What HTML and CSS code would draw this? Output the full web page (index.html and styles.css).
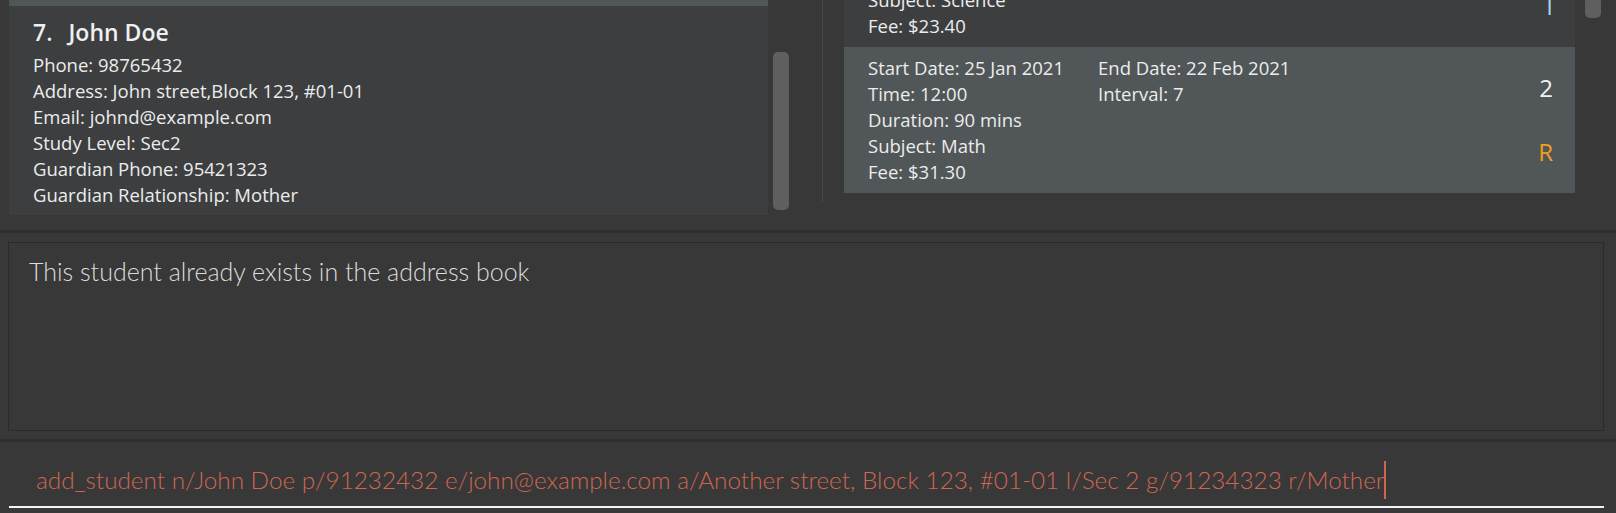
FILE: index.html
```html
<!DOCTYPE html>
<html>
<head>
<meta charset="utf-8">
<link rel="stylesheet" href="styles.css">
</head>
<body>
<div class="app">
  <div class="top">
    <div class="left-pane">
      <div class="list left-list">
        <div class="card-stub"></div>
        <div class="person">
          <div class="name"><span class="num">7.</span><span>John Doe</span></div>
          <div class="lines">
            <div>Phone: 98765432</div>
            <div>Address: John street,Block 123, #01-01</div>
            <div>Email: johnd@example.com</div>
            <div>Study Level: Sec2</div>
            <div>Guardian Phone: 95421323</div>
            <div>Guardian Relationship: Mother</div>
          </div>
        </div>
      </div>
      <div class="scrollbar"><div class="thumb left-thumb"></div></div>
    </div>
    <div class="right-pane">
      <div class="list right-list">
        <div class="right-inner">
          <div class="lesson">
            <div class="col col1">
              <div>Start Date: 18 Jan 2021</div>
              <div>Time: 10:00</div>
              <div>Duration: 60 mins</div>
              <div>Subject: Science</div>
              <div>Fee: $23.40</div>
            </div>
            <div class="col col2">
              <div>End Date: 15 Feb 2021</div>
              <div>Interval: 7</div>
            </div>
            <div class="side">
              <div class="idx">1</div>
              <div class="tag tag-blue">I</div>
            </div>
          </div>
          <div class="lesson selected">
            <div class="col col1">
              <div>Start Date: 25 Jan 2021</div>
              <div>Time: 12:00</div>
              <div>Duration: 90 mins</div>
              <div>Subject: Math</div>
              <div>Fee: $31.30</div>
            </div>
            <div class="col col2">
              <div>End Date: 22 Feb 2021</div>
              <div>Interval: 7</div>
            </div>
            <div class="side">
              <div class="idx">2</div>
              <div class="tag tag-orange">R</div>
            </div>
          </div>
        </div>
      </div>
      <div class="scrollbar right-scroll"><div class="thumb right-thumb"></div></div>
    </div>
  </div>
  <div class="divider"></div>
  <div class="result-wrap">
    <div class="result">This student already exists in the address book</div>
  </div>
  <div class="divider"></div>
  <div class="command">
    <div class="command-field"><span class="cmd-text">add_student n/John Doe p/91232432 e/john@example.com a/Another street, Block 123, #01-01 l/Sec 2 g/91234323 r/Mother</span><span class="caret"></span></div>
  </div>
</div>
</body>
</html>
```
FILE: styles.css
```css
html, body {
  margin: 0;
  padding: 0;
  background: #383838;
  overflow: hidden;
}

body {
  font-family: "Open Sans", "Noto Sans", sans-serif;
  color: #ececec;
}

.app {
  width: 1616px;
  height: 513px;
  display: flex;
  flex-direction: column;
}

.top {
  height: 230px;
  display: flex;
  overflow: hidden;
  flex-shrink: 0;
}

.left-pane {
  display: flex;
  width: 822px;
  flex-shrink: 0;
}

.list {
  overflow: hidden;
}

.left-list {
  margin-left: 9px;
  width: 759px;
  height: 230px;
}

.card-stub {
  height: 6px;
  background: #515658;
}

.person {
  background: #3c3e3f;
  height: 209px;
  box-sizing: border-box;
  padding: 11px 0 0 24px;
}

.name {
  display: flex;
  gap: 16px;
  font-size: 23px;
  font-weight: 600;
  line-height: 30px;
  color: #f0f0f0;
}

.lines {
  margin-top: 5px;
  font-size: 18.5px;
  line-height: 26px;
}

.scrollbar {
  width: 16px;
  margin-left: 5px;
  display: flex;
  flex-direction: column;
}

.thumb {
  width: 16px;
  background: #5f5f5f;
  border-radius: 5px;
}

.left-thumb {
  margin-top: 52px;
  height: 158px;
}

.right-pane {
  display: flex;
  height: 202px;
  border-left: 1px solid #4a4a4a;
  padding-left: 21px;
  flex-shrink: 0;
}

.right-list {
  width: 731px;
  height: 202px;
}

.right-inner {
  margin-top: -99px;
}

.lesson {
  height: 146px;
  box-sizing: border-box;
  background: #3c3e3f;
  display: flex;
  padding: 8px 22px 0 24px;
  font-size: 18.5px;
  line-height: 26px;
}

.lesson.selected {
  background: #515658;
}

.col1 {
  width: 230px;
}

.col2 {
  flex: 1;
}

.side {
  display: flex;
  flex-direction: column;
  align-items: flex-end;
  padding-top: 21px;
  font-size: 24px;
  line-height: 24px;
}

.idx {
  color: #f2f2f2;
  height: 24px;
}

.tag {
  margin-top: 40px;
}

.tag-orange {
  color: #f3a118;
}

.tag-blue {
  color: #a6d3e6;
}

.right-scroll {
  margin-left: 10px;
}

.right-thumb {
  margin-top: -22px;
  height: 40px;
}

.divider {
  height: 3px;
  background: #2e2e2e;
  flex-shrink: 0;
}

.result-wrap {
  height: 206px;
  box-sizing: border-box;
  padding: 9px 12px 8px 8px;
  flex-shrink: 0;
}

.result {
  height: 100%;
  box-sizing: border-box;
  border: 1px solid #2b2b2b;
  padding: 11px 0 0 20px;
  font-family: "Lato", "Open Sans", sans-serif;
  font-size: 25px;
  font-weight: 300;
  line-height: 34px;
  color: #dcdcdc;
}

.command {
  flex: 1;
  padding: 0 12px 0 9px;
  display: flex;
  flex-direction: column;
}

.command-field {
  margin-top: 19px;
  height: 47px;
  box-sizing: border-box;
  border-bottom: 2px solid #f4f4f4;
  padding: 2px 0 0 27px;
  font-family: "Lato", "Open Sans", sans-serif;
  font-size: 24.3px;
  font-weight: 300;
  line-height: 34px;
  color: #d06651;
  display: flex;
  align-items: flex-start;
  white-space: nowrap;
}

.caret {
  display: inline-block;
  width: 2px;
  height: 38px;
  margin-top: -2px;
  background: #d06651;
}
```
